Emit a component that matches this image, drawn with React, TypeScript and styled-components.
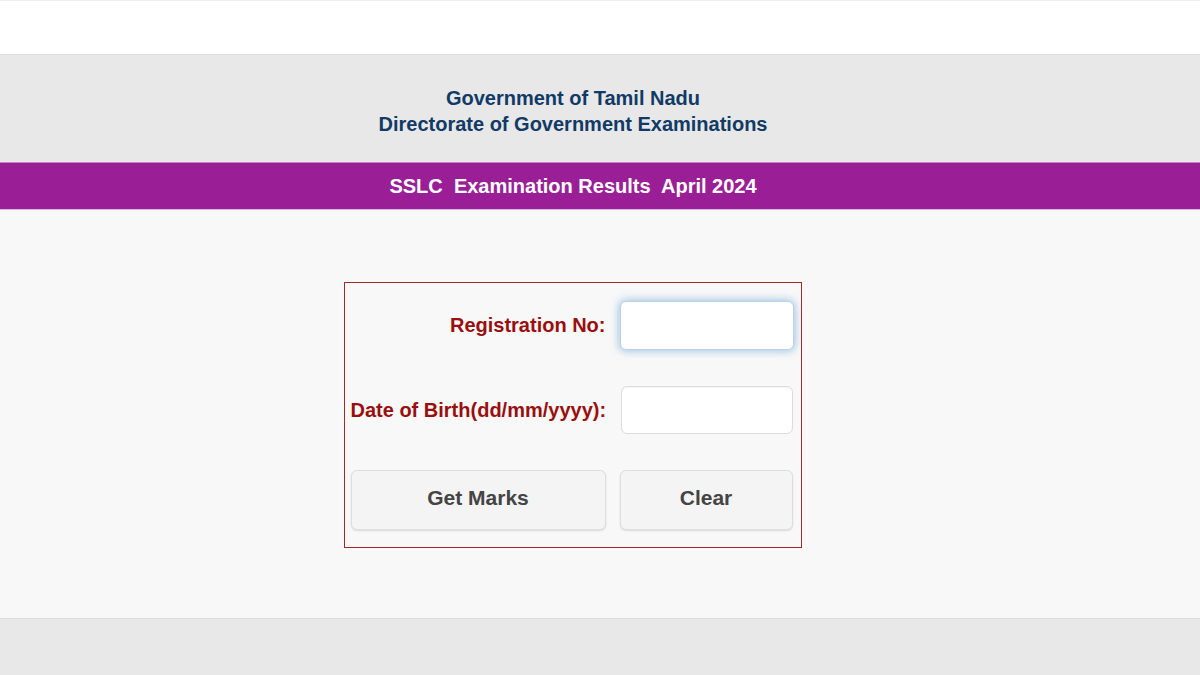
import React, { useState } from "react";
import styled, { createGlobalStyle } from "styled-components";

const GlobalStyle = createGlobalStyle`
  html, body {
    margin: 0;
    padding: 0;
    background: #f8f8f8;
    font-family: "Liberation Sans", Arial, sans-serif;
  }
`;

const Page = styled.div`
  display: flex;
  flex-direction: column;
  min-height: 675px;
`;

const TopBar = styled.div`
  height: 53px;
  background: #ffffff;
  border-top: 1px solid #eceef3;
  border-bottom: 1px solid #dcdcdc;
`;

// content sits centred on x=573, not the page centre
const Header = styled.div`
  height: 107px;
  background: #e8e8e8;
  display: flex;
  flex-direction: column;
  align-items: center;
  padding: 30px 54px 0 0;
  box-sizing: border-box;
  color: #113a66;
  font-size: 20px;
  font-weight: bold;
  line-height: 26px;
`;

const Band = styled.div`
  height: 48px;
  background: #9a1f96;
  border-top: 1px solid #c77fc4;
  border-bottom: 1px solid #dcb5da;
  box-sizing: border-box;
  display: flex;
  align-items: center;
  justify-content: center;
  padding-right: 54px;
  color: #ffffff;
  font-size: 20px;
  font-weight: bold;
  white-space: pre;
`;

const Main = styled.div`
  flex: 1;
  background: #f8f8f8;
  display: flex;
  justify-content: center;
  padding: 72px 55px 0 0;
  height: 337px;
`;

const FormBox = styled.form`
  width: 458px;
  height: 266px;
  box-sizing: border-box;
  border: 1px solid #a02a2a;
  padding: 18px 7px 18px 6px;
  display: grid;
  grid-template-columns: 255px 173px;
  grid-template-rows: 49px 48px 60px;
  column-gap: 14px;
  row-gap: 36px;
  align-items: center;
`;

const Label = styled.label`
  text-align: right;
  color: #990f0f;
  font-size: 20px;
  font-weight: bold;
  white-space: nowrap;
`;

const Input = styled.input<{ $focused?: boolean }>`
  box-sizing: border-box;
  width: ${(p) => (p.$focused ? "174px" : "172px")};
  height: ${(p) => (p.$focused ? "49px" : "48px")};
  margin-left: ${(p) => (p.$focused ? "0" : "1px")};
  border: 1px solid ${(p) => (p.$focused ? "#b9d3ea" : "#dcdcdc")};
  border-radius: 6px;
  background: #ffffff;
  outline: none;
  font-size: 16px;
  padding: 0 10px;
  box-shadow: ${(p) =>
    p.$focused ? "0 0 8px 1px rgba(82, 148, 208, 0.55)" : "inset 0 1px 1px rgba(0,0,0,0.04)"};
`;

const Button = styled.button`
  height: 60px;
  width: 100%;
  box-sizing: border-box;
  padding: 0 0 4px;
  background: #f4f4f4;
  border: 1px solid #dedede;
  border-radius: 6px;
  box-shadow: 0 1px 2px rgba(0, 0, 0, 0.12);
  color: #444444;
  font-family: "Liberation Sans", Arial, sans-serif;
  font-size: 21px;
  font-weight: bold;
  cursor: pointer;
`;

const Footer = styled.div`
  height: 56px;
  background: #e8e8e8;
  border-top: 1px solid #dcdcdc;
`;

export default function App() {
  const [regNo, setRegNo] = useState("");
  const [dob, setDob] = useState("");

  return (
    <Page>
      <GlobalStyle />
      <TopBar />
      <Header>
        <div>Government of Tamil Nadu</div>
        <div>Directorate of Government Examinations</div>
      </Header>
      <Band>{"SSLC  Examination Results  April 2024"}</Band>
      <Main>
        <FormBox onSubmit={(e) => e.preventDefault()}>
          <Label htmlFor="regno">Registration No:</Label>
          <Input
            id="regno"
            $focused
            value={regNo}
            onChange={(e) => setRegNo(e.target.value)}
          />
          <Label htmlFor="dob">Date of Birth(dd/mm/yyyy):</Label>
          <Input id="dob" value={dob} onChange={(e) => setDob(e.target.value)} />
          <Button type="submit">Get Marks</Button>
          <Button
            type="button"
            onClick={() => {
              setRegNo("");
              setDob("");
            }}
          >
            Clear
          </Button>
        </FormBox>
      </Main>
      <Footer />
    </Page>
  );
}
